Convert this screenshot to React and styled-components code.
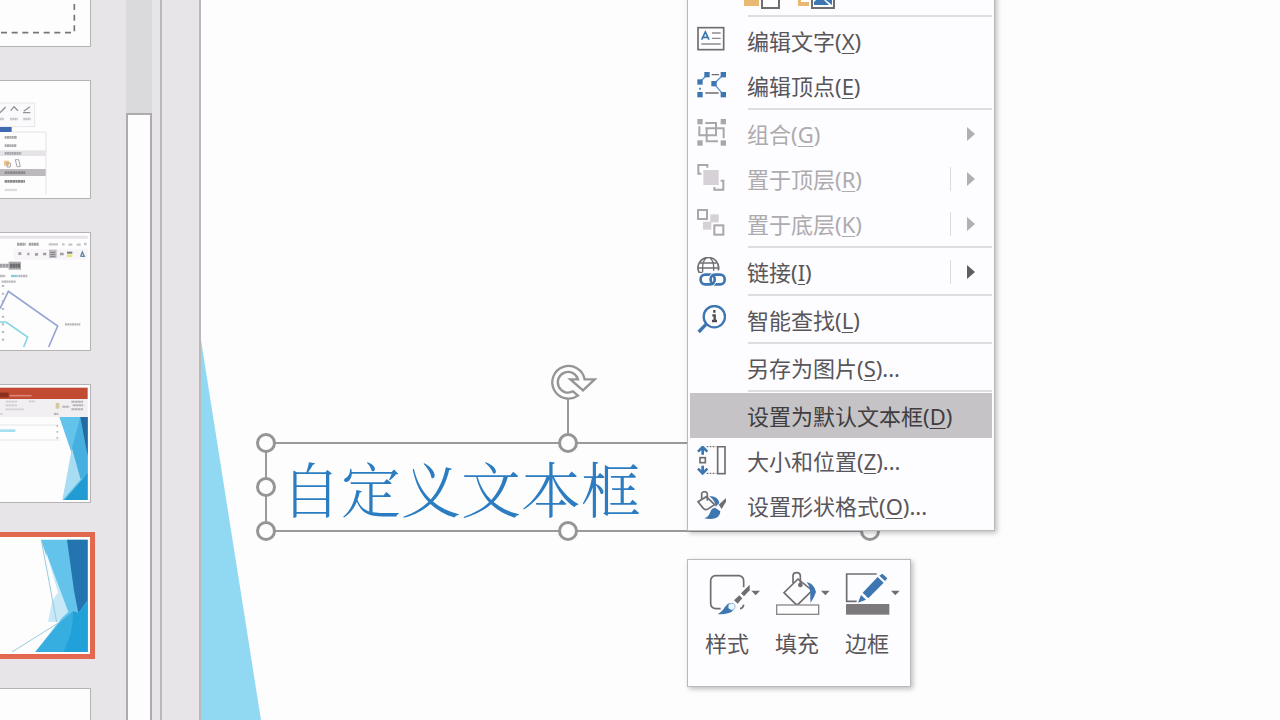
import styled, { createGlobalStyle } from "styled-components";

const GlobalStyle = createGlobalStyle`
  * {
    box-sizing: border-box;
  }
  body {
    margin: 0;
    overflow: hidden;
    font-family: "Noto Sans", "Noto Sans CJK SC", sans-serif;
    color: #58565a;
  }
  button,
  input {
    font: inherit;
    color: inherit;
  }
  svg {
    display: block;
    flex: none;
  }
`;

const Container = styled.div`
  display: flex;
  height: 100vh;
  overflow: hidden;
  background-color: #e7e5e8;
`;

const SlidePanel = styled.nav`
  display: flex;
  flex: none;
  padding-right: 8px;
  border-right: 2px solid #bab8bb;
`;

const SlideList = styled.div`
  display: flex;
  flex-direction: column;
  align-items: flex-end;
  gap: 33px;
  width: 126px;
  margin-top: -72px;
  padding-right: 35px;
`;

const Slide = styled.button`
  display: flex;
  flex: none;
  justify-content: flex-end;
  width: 211px;
  height: 119px;
  padding: 0;
  border: 1px solid ${(props) => (props.$selected ? "#e2694f" : "#b4b2b5")};
  box-shadow: ${(props) => props.$selected && "0 0 0 4px #e2694f"};
  background-color: #fefdfe;
`;

const ScrollTrack = styled.div`
  display: flex;
  width: 26px;
  padding-top: 113px;
  background-color: #dad9db;
`;

const ScrollThumb = styled.div`
  flex: 1;
  border: 2px solid #adabae;
  border-bottom: none;
  background-color: #fefdfe;
`;

const Stage = styled.main`
  position: relative;
  flex: 1;
  margin-left: 37px;
  border-left: 2px solid #bab8bb;
  background-color: #fefdfe;
`;

const Ribbon = styled.svg`
  position: absolute;
  left: 0;
  top: 340px;
`;

const TextBox = styled.div`
  position: absolute;
  left: 65px;
  top: 443px;
  width: 604px;
  height: 88px;
  outline: 2px solid #9b999b;
  outline-offset: -1px;
`;

const TextInput = styled.input`
  width: 100%;
  height: 100%;
  padding: 0 15px;
  border: none;
  outline: none;
  background: transparent;
  color: #2b7cc1;
  font-family: "Noto Serif CJK SC", "Noto Sans CJK SC", serif;
  font-size: 60px;
  font-weight: 300;
  line-height: 80px;
`;

const Handle = styled.span`
  position: absolute;
  left: ${(props) => props.$x};
  top: ${(props) => props.$y};
  width: 20px;
  height: 20px;
  border: 3px solid #969497;
  border-radius: 50%;
  background-color: #fefdfe;
  transform: translate(-50%, -50%);
`;

const RotateHandle = styled.svg`
  position: absolute;
  left: 50%;
  bottom: 100%;
  margin-left: -20px;
`;

const Menu = styled.div`
  position: absolute;
  left: 486px;
  top: -29px;
  width: 308px;
  padding: 2px;
  border: 1px solid #bbb9bc;
  background-color: #fdfcfe;
  box-shadow: 2px 2px 5px rgba(0, 0, 0, 0.25);
`;

const PasteRow = styled.div`
  display: flex;
  gap: 14px;
  padding: 0 0 5px 52px;
`;

const PasteButton = styled.button`
  padding: 0;
  border: none;
  background: transparent;
`;

const MenuItem = styled.button`
  display: flex;
  align-items: center;
  width: 100%;
  height: 45px;
  padding: 0 6px;
  border: none;
  background-color: ${(props) => (props.$active ? "#c5c3c5" : "transparent")};
  color: ${(props) => props.$active && "#3f3d40"};
  font-size: 22px;
  line-height: 30px;
  text-align: left;
  &:disabled {
    color: #adabae;
  }
`;

const IconSlot = styled.span`
  width: 30px;
  height: 30px;
  margin-right: 21px;
`;

const ItemLabel = styled.span`
  flex: 1;
  white-space: nowrap;
  u {
    text-decoration-thickness: 1px;
    text-underline-offset: 3px;
  }
`;

const ArrowSlot = styled.span`
  display: flex;
  align-items: center;
  width: 36px;
  height: 24px;
  padding-left: 16px;
  border-left: 1px solid ${(props) => (props.$split ? "#dcdadd" : "transparent")};
`;

const Separator = styled.hr`
  height: 3px;
  margin: 0 0 0 58px;
  border: none;
  border-top: 2px solid #dfdde0;
`;

const MiniToolbar = styled.div`
  position: absolute;
  left: 486px;
  top: 559px;
  display: flex;
  padding: 10px 8px 28px 4px;
  border: 1px solid #bbb9bc;
  background-color: #fdfcfe;
  box-shadow: 2px 2px 5px rgba(0, 0, 0, 0.25);
`;

const ToolButton = styled.button`
  display: flex;
  flex-direction: column;
  align-items: center;
  gap: 10px;
  width: 70px;
  padding: 0;
  border: none;
  background: transparent;
  font-size: 22px;
  line-height: 30px;
`;

const GREY = "#6f6d70";
const DIM = "#a9a7aa";
const BLUE = "#3d76b0";

const Icon = ({ y, children }) => (
  <svg width="30" height="30" viewBox={`48 ${y} 90 90`} fill="none">
    {children}
  </svg>
);

const Squares = ({ points, size = 16, fill }) =>
  points.map(([x, y]) => (
    <rect key={`${x}-${y}`} x={x - size / 2} y={y - size / 2} width={size} height={size} fill={fill} />
  ));

const EditTextIcon = () => (
  <Icon y={77}>
    <rect x="54" y="82" width="77" height="66" stroke={GREY} strokeWidth="5" />
    <path d="M65 118 L76 95 L87 118 M69 111 H83" stroke={BLUE} strokeWidth="5" />
    <path d="M96 98 H122 M96 114 H122 M64 131 H122" stroke="#8d8b8e" strokeWidth="4" />
  </Icon>
);

const EditPointsIcon = () => (
  <Icon y={211}>
    <path d="M81 222 L60 244 M130 222 L102 249 L130 282" stroke="#5d93c8" strokeWidth="4" />
    <path d="M95 222 H117 M76 277 H116" stroke={GREY} strokeWidth="4" />
    <path d="M60 261 V267" stroke={BLUE} strokeWidth="5" />
    <Squares
      points={[[81, 222], [130, 222], [60, 244], [102, 249], [60, 282], [130, 282]]}
      fill={BLUE}
    />
  </Icon>
);

const GroupIcon = () => (
  <Icon y={40}>
    <path d="M76 52 H108 V89 H58 V62" stroke={DIM} strokeWidth="6" />
    <path d="M76 68 H131 V98 M114 107 H80 V65" stroke={DIM} strokeWidth="6" />
    <Squares points={[[60, 48], [130, 48], [60, 112], [130, 112]]} fill={DIM} />
  </Icon>
);

const FrontIcon = () => (
  <Icon y={175}>
    <rect x="70" y="193" width="46" height="45" fill="#d5d1d6" />
    <path d="M82 186 V178 H55 V204 H64" stroke={DIM} strokeWidth="6" />
    <path d="M122 225 H130 V252 H103 V244" stroke={DIM} strokeWidth="6" />
  </Icon>
);

const BackIcon = () => (
  <Icon y={310}>
    <rect x="91" y="326" width="25" height="24" fill="#d5d1d6" />
    <rect x="69" y="348" width="25" height="24" fill="#d5d1d6" />
    <rect x="54" y="313" width="27" height="27" stroke={DIM} strokeWidth="6" />
    <rect x="103" y="359" width="27" height="28" stroke={DIM} strokeWidth="6" />
  </Icon>
);

const LinkIcon = () => (
  <Icon y={49}>
    <path d="M57 95 A31 31 0 1 1 115 89" stroke={GREY} strokeWidth="5" />
    <path d="M68 93 V80 Q68 62 78 53 M101 90 V80 Q101 62 91 53 M60 67 H110 M54 82 H115 M56 95 H68" stroke={GREY} strokeWidth="4" />
    <rect x="62" y="102" width="42" height="29" rx="13" stroke={BLUE} strokeWidth="8" />
    <rect x="92" y="102" width="42" height="29" rx="13" stroke={BLUE} strokeWidth="8" />
    <path d="M96 98 L84 112 M112 121 L100 135" stroke="#fdfcfe" strokeWidth="3" />
  </Icon>
);

const LookupIcon = () => (
  <Icon y={195}>
    <circle cx="103" cy="230" r="32" stroke={BLUE} strokeWidth="7" />
    <path d="M80 251 L56 276" stroke={BLUE} strokeWidth="10" />
    <path d="M103 210 V218 M97 226 H104 V242 M96 243 H111" stroke="#4d4b4e" strokeWidth="7" />
  </Icon>
);

const SizeIcon = () => (
  <Icon y={185}>
    <path d="M68 211 V190 M54 202 L68 188 L82 202 M68 244 V266 M54 253 L68 267 L82 253" stroke={BLUE} strokeWidth="8" />
    <rect x="60" y="220" width="16" height="15" stroke={GREY} strokeWidth="5" />
    <path d="M80 187 H109 M80 267 H109" stroke={GREY} strokeWidth="4" strokeDasharray="5 4" />
    <rect x="113" y="187" width="22" height="81" stroke={GREY} strokeWidth="5" />
  </Icon>
);

const FormatIcon = () => (
  <Icon y={320}>
    <path d="M79 337 L104 361 L82 375 Q76 378 70 372 L54 352 Z" stroke={GREY} strokeWidth="5" />
    <path d="M65 344 V328 Q66 322 74 322 Q82 322 82 330 V349" stroke={GREY} strokeWidth="5" />
    <path d="M88 335 Q114 336 118 355 L107 368 Q108 352 88 335 Z" fill={BLUE} />
    <path d="M138 341 L116 361 L125 374 L138 352 Z" fill={GREY} />
    <path d="M121 381 L105 370 Q93 372 90 385 Q86 397 72 402 Q104 408 115 396 Q121 390 121 381 Z" fill={BLUE} />
  </Icon>
);

const StyleIcon = () => (
  <svg width="70" height="48" viewBox="36 60 210 144" fill="none">
    <path d="M122 176 H106 Q92 174 92 160 V92 Q93 78 107 77 H177 Q191 79 191 93 V112 M180 176 Q190 174 191 164" stroke={GREY} strokeWidth="5" />
    <path d="M209 104 V121 L192 139 L183 130 Z" fill={GREY} />
    <path d="M178 136 L187 145 L173 161 L162 151 Z" fill={GREY} />
    <path d="M142 163 Q149 157 158 163 Q165 170 160 178 Q157 193 113 193 Q129 183 134 172 Z" fill={BLUE} />
    <path d="M147 162 Q163 156 165 167 Q166 181 154 180 Q139 176 147 162 Z" fill="#eef7fd" stroke="#6da0cd" strokeWidth="2" />
    <path d="M214 122 H240 L227 136 Z" fill={GREY} />
  </svg>
);

const FillIcon = () => (
  <svg width="70" height="48" viewBox="246 60 210 144" fill="none">
    <path d="M354 87 L312 128 L348 163 H354 L394 124 L390 116 Z" stroke={GREY} strokeWidth="5" />
    <path d="M339 99 V76 Q340 68 350 68 Q360 68 361 77 V104" stroke={GREY} strokeWidth="5" />
    <circle cx="361" cy="105" r="7" fill={GREY} />
    <path d="M380 96 Q403 101 408 126 Q403 142 392 158 Q390 142 391 128 Q391 111 380 96 Z" fill={BLUE} />
    <rect x="290" y="165" width="126" height="28" fill="#fefefe" stroke="#8a888b" strokeWidth="4" />
    <path d="M423 122 H449 L436 136 Z" fill={GREY} />
  </svg>
);

const OutlineIcon = () => (
  <svg width="70" height="48" viewBox="456 60 210 144" fill="none">
    <path d="M590 72 H500 V154 H530" stroke={GREY} strokeWidth="5" />
    <path d="M593 81 L611 98 L565 145 L548 128 Z" fill={BLUE} />
    <path d="M607 71 L622 85 L615 93 L598 77 Z" fill={BLUE} />
    <path d="M543 135 L558 149 L534 158 Z" fill={BLUE} />
    <rect x="498" y="162" width="130" height="32" fill="#7b797c" />
    <path d="M633 122 H659 L646 136 Z" fill={GREY} />
  </svg>
);

const SlideArt = ({ y, children }) => (
  <svg width="90" height="117" viewBox={`0 ${y} 270 351`} fill="none">
    {children}
  </svg>
);

const PlaceholderArt = () => (
  <SlideArt y={-213}>
    <path d="M223 -180 V98 H0" stroke="#77757a" strokeWidth="5" strokeDasharray="18 14" />
  </SlideArt>
);

const MenuArt = () => (
  <SlideArt y={243}>
    <rect x="-5" y="309" width="109" height="71" fill="#fafafc" stroke="#e6e5e9" strokeWidth="3" />
    <path d="M0 338 L17 321 M32 332 L42 320 L54 332 M71 334 L90 320 M69 338 H91" stroke="#949296" strokeWidth="4" />
    <path d="M0 357 H12 M31 357 H53 M70 357 H92" stroke="#c4c2c6" strokeWidth="8" strokeDasharray="5 1" />
    <rect x="0" y="381" width="35" height="15" fill="#4169b1" />
    <path d="M35 396 H138 V583" stroke="#e4e2e6" strokeWidth="3" />
    <rect x="0" y="451" width="137" height="17" fill="#e5e3e6" />
    <rect x="0" y="507" width="137" height="21" fill="#bcbabd" />
    <path d="M14 412 H51 M14 437 H50 M14 460 H64" stroke="#a9a7ab" strokeWidth="8" strokeDasharray="6 1" />
    <path d="M14 518 H76 M14 544 H75" stroke="#8b898d" strokeWidth="8" strokeDasharray="7 1" />
    <path d="M14 570 H51" stroke="#dddbdf" strokeWidth="7" />
    <path d="M12 482 H27 V497 H12 Z" fill="#edc489" />
    <path d="M46 479 H56 L61 500 H51 Z M21 489 H31 V501 H21 Z" stroke="#a5a3a8" strokeWidth="3" />
  </SlideArt>
);

const ShapesArt = () => (
  <SlideArt y={24}>
    <path d="M0 37 H263" stroke="#e6e3e7" strokeWidth="9" />
    <path d="M41 72 H263 V104 H41 Z" fill="#f7f5f8" />
    <path d="M51 58 H77 M86 58 H116" stroke="#a3a1a5" strokeWidth="9" strokeDasharray="7 1" />
    <path d="M146 58 H174 M186 58 H194 M205 59 H217 M230 59 H242 M252 57 H260" stroke="#c7c5ca" strokeWidth="7" />
    <path d="M55 86 H64 M82 87 H88 M105 88 H114 M129 87 H139 M180 87 H191" stroke="#a19fa4" strokeWidth="8" />
    <rect x="147" y="74" width="23" height="25" fill="#c1bec3" />
    <path d="M151 82 H166 M151 88 H166 M151 94 H166" stroke="#828085" strokeWidth="3" />
    <path d="M201 83 H217" stroke="#7c7a7d" strokeWidth="6" />
    <path d="M201 92 H217" stroke="#e3e875" strokeWidth="8" />
    <path d="M242 94 L247 81 L253 94 H241" stroke="#5d88a6" strokeWidth="4" />
    <path d="M0 122 H27" stroke="#a09ea2" strokeWidth="12" strokeDasharray="8 1" />
    <rect x="26" y="110" width="37" height="24" fill="#aaa8ab" />
    <path d="M30 122 H60" stroke="#6c6a6e" strokeWidth="12" strokeDasharray="7 1" />
    <path d="M0 153 H16 M55 153 H82 M5 170 H48" stroke="#b9b7bc" strokeWidth="7" strokeDasharray="6 1" />
    <path d="M33 153 H53" stroke="#8fcbd2" strokeWidth="7" />
    <path d="M9 180 V350" stroke="#b5b9c2" strokeWidth="7" strokeDasharray="6 17" />
    <path d="M0 251 L25 199 L173 303 L146 366" stroke="#96a5d3" strokeWidth="5" />
    <path d="M0 291 H18 L83 336 L71 366" stroke="#83d6e5" strokeWidth="5" />
    <path d="M195 298 H241" stroke="#b8b6bb" strokeWidth="7" strokeDasharray="6 1" />
  </SlideArt>
);

const WindowArt = () => (
  <SlideArt y={30}>
    <rect x="0" y="38" width="263" height="34" fill="#c14a32" />
    <path d="M0 60 H26" stroke="#8a2f20" strokeWidth="14" />
    <path d="M29 62 H95" stroke="#d98672" strokeWidth="5" />
    <rect x="0" y="72" width="263" height="54" fill="#f1eff1" />
    <path d="M17 80 H51 M17 91 H51 M17 103 H72 M86 79 H106 M0 117 H8" stroke="#d0ced2" strokeWidth="5" strokeDasharray="8 1" />
    <path d="M187 95 H208 M214 80 H250 M218 91 H250 M214 103 H250 M162 117 H175" stroke="#b5b3b8" strokeWidth="6" strokeDasharray="8 1" />
    <rect x="167" y="84" width="11" height="17" fill="#d2c99c" />
    <path d="M0 150 H174 M0 195 H178" stroke="#e6e5e8" strokeWidth="3" />
    <path d="M0 167 H46" stroke="#a6dff1" strokeWidth="8" />
    <path d="M172 150 V195" stroke="#bbb9bd" strokeWidth="5" strokeDasharray="5 13" />
    <path d="M178 126 H263 V375 H187 L241 311 Z" fill="#64c3ea" />
    <path d="M216 219 L242 313 L187 375 Z" fill="#a8dcf2" />
    <path d="M216 219 L241 126 H263 V301 L242 313 Z" fill="#47afe0" />
    <path d="M241 126 H263 V243 Z" fill="#256aa0" />
    <path d="M263 295 V375 H193 Z" fill="#219bd2" />
  </SlideArt>
);

const FacetArt = () => (
  <SlideArt y={486}>
    <path d="M123 494 H263 V831 H106 L196 715 Z" fill="#64c3ea" />
    <path d="M139 534 L205 711 L172 741 L144 740 L156 680 Z" fill="#c6e8f7" />
    <path d="M139 534 L174 652 L156 680 Z" fill="#fefdfe" />
    <path d="M201 494 H263 V682 L235 714 L222 647 Z" fill="#2474af" />
    <path d="M263 675 V831 H106 L181 740 L219 709 L235 714 Z" fill="#36aedf" />
    <path d="M219 709 L235 714 L263 682 V831 H190 Q222 770 219 709 Z" fill="#20a1d9" />
    <path d="M124 496 L170 741 M36 831 L181 740" stroke="#9acbdc" strokeWidth="3" />
  </SlideArt>
);

const slides = [
  { id: 1, name: "幻灯片 1", Art: PlaceholderArt },
  { id: 2, name: "幻灯片 2", Art: MenuArt },
  { id: 3, name: "幻灯片 3", Art: ShapesArt },
  { id: 4, name: "幻灯片 4", Art: WindowArt },
  { id: 5, name: "幻灯片 5", Art: FacetArt, selected: true },
  { id: 6, name: "幻灯片 6" },
];

const menuGroups = [
  [
    { text: "编辑文字", hotkey: "X", MenuIcon: EditTextIcon },
    { text: "编辑顶点", hotkey: "E", MenuIcon: EditPointsIcon },
  ],
  [
    { text: "组合", hotkey: "G", MenuIcon: GroupIcon, disabled: true, arrow: true },
    { text: "置于顶层", hotkey: "R", MenuIcon: FrontIcon, disabled: true, arrow: true, split: true },
    { text: "置于底层", hotkey: "K", MenuIcon: BackIcon, disabled: true, arrow: true, split: true },
  ],
  [{ text: "链接", hotkey: "I", MenuIcon: LinkIcon, arrow: true, split: true }],
  [{ text: "智能查找", hotkey: "L", MenuIcon: LookupIcon }],
  [{ text: "另存为图片", hotkey: "S", more: true }],
  [
    { text: "设置为默认文本框", hotkey: "D", active: true },
    { text: "大小和位置", hotkey: "Z", MenuIcon: SizeIcon, more: true },
    { text: "设置形状格式", hotkey: "O", MenuIcon: FormatIcon, more: true },
  ],
];

const tools = [
  { text: "样式", ToolIcon: StyleIcon },
  { text: "填充", ToolIcon: FillIcon },
  { text: "边框", ToolIcon: OutlineIcon },
];

const handles = [
  ["0%", "0%"],
  ["50%", "0%"],
  ["100%", "0%"],
  ["0%", "50%"],
  ["100%", "50%"],
  ["0%", "100%"],
  ["50%", "100%"],
  ["100%", "100%"],
];

const ContextMenu = () => (
  <Menu role="menu">
    <PasteRow>
      <PasteButton aria-label="使用目标主题">
        <svg width="40" height="36" viewBox="0 0 40 36">
          <path d="M2 4 H17 V32 H2 Z" fill="#e9b872" />
          <path d="M20 12 H37 V34 H20 Z" fill="#fefefe" stroke={GREY} strokeWidth="2" />
        </svg>
      </PasteButton>
      <PasteButton aria-label="图片">
        <svg width="40" height="36" viewBox="0 0 40 36">
          <path d="M2 4 H13 V32 H2 Z" fill="#e9b872" />
          <path d="M5 8 H13 V28 H5 Z" fill="#fefefe" />
          <path d="M16 12 H38 V34 H16 Z" fill="#fefefe" stroke={GREY} strokeWidth="2" />
          <path d="M18 31 V28 L24 22 L33 31 Z M26 23 L31 19 L36 24 V31 Z" fill={BLUE} />
        </svg>
      </PasteButton>
    </PasteRow>
    {menuGroups.map((group) => (
      <div key={group[0].text} role="group">
        <Separator />
        {group.map(({ text, hotkey, MenuIcon, disabled, active, arrow, split, more }) => (
          <MenuItem key={text} role="menuitem" disabled={disabled} $active={active}>
            <IconSlot>{MenuIcon && <MenuIcon />}</IconSlot>
            <ItemLabel>
              {text}(<u>{hotkey}</u>){more && "..."}
            </ItemLabel>
            {arrow && (
              <ArrowSlot $split={split}>
                <svg width="8" height="14" viewBox="0 0 8 14">
                  <path d="M0 0 L8 7 L0 14 Z" fill={disabled ? "#b1afb2" : "#5f5d60"} />
                </svg>
              </ArrowSlot>
            )}
          </MenuItem>
        ))}
      </div>
    ))}
  </Menu>
);

const App = () => {
  return (
    <>
      <GlobalStyle />
      <Container>
        <SlidePanel>
          <SlideList>
            {slides.map(({ id, name, Art, selected }) => (
              <Slide key={id} aria-label={name} $selected={selected}>
                {Art && <Art />}
              </Slide>
            ))}
          </SlideList>
          <ScrollTrack>
            <ScrollThumb />
          </ScrollTrack>
        </SlidePanel>
        <Stage>
          <Ribbon width="60" height="380" viewBox="0 0 60 380">
            <path d="M0 0 L60 380 H0 Z" fill="#91d9f2" />
          </Ribbon>
          <TextBox>
            <TextInput aria-label="文本框" defaultValue="自定义文本框" />
            <RotateHandle width="50" height="82" viewBox="895 20 150 246" fill="none">
              <path d="M955 135 V266" stroke="#9b999b" strokeWidth="6" />
              <path
                d="M985 124 A49 49 0 1 1 1005 75 L1035 75 L1000 108 L962 75 L985 75 A31 31 0 1 0 970 111 Z"
                fill="#fefdfe"
                stroke="#969497"
                strokeWidth="7"
              />
            </RotateHandle>
            {handles.map(([x, y]) => (
              <Handle key={x + y} $x={x} $y={y} />
            ))}
          </TextBox>
          <ContextMenu />
          <MiniToolbar role="toolbar">
            {tools.map(({ text, ToolIcon }) => (
              <ToolButton key={text}>
                <ToolIcon />
                {text}
              </ToolButton>
            ))}
          </MiniToolbar>
        </Stage>
      </Container>
    </>
  );
};

export default App;
